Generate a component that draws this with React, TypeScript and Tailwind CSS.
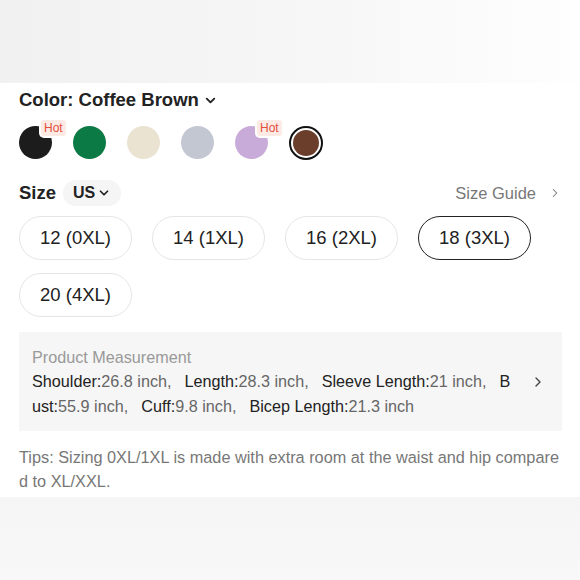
import { ChevronDown, ChevronRight } from "lucide-react";

const SWATCHES: { color: string; hot?: boolean; active?: boolean }[] = [
  { color: "#1c1c1c", hot: true },
  { color: "#0b7a45" },
  { color: "#ebe3d1" },
  { color: "#c3c7d1" },
  { color: "#c9abd9", hot: true },
  { color: "#6b3e2c", active: true },
];

const SIZES = ["12 (0XL)", "14 (1XL)", "16 (2XL)", "18 (3XL)", "20 (4XL)"];

const MEASURES = [
  ["Shoulder:", "26.8 inch,"],
  ["Length:", "28.3 inch,"],
  ["Sleeve Length:", "21 inch,"],
  ["Bust:", "55.9 inch,"],
  ["Cuff:", "9.8 inch,"],
  ["Bicep Length:", "21.3 inch"],
];

export default function App() {
  return (
    <div
      className="w-[580px] h-[580px] overflow-hidden bg-white flex flex-col text-[#222]"
      style={{ fontFamily: '"Liberation Sans", Arial, sans-serif' }}
    >
      {/* image strip above */}
      <div className="h-[83px] shrink-0 bg-gradient-to-r from-[#f1f1f1] via-[#f6f6f6] to-[#fefefe]" />

      <div className="pl-[19px] pr-[18px] pt-[5px]">
        <div className="flex items-center gap-[4px] h-[24px]">
          <span className="text-[18.5px] font-bold leading-[24px]">Color: Coffee Brown</span>
          <ChevronDown className="size-[15px] mt-[1px]" strokeWidth={3} aria-hidden />
        </div>

        <div className="mt-[8px] flex gap-[20px]">
          {SWATCHES.map((s, i) => (
            <div key={i} className="relative w-[34px] h-[40px] pt-[6px]">
              {s.active ? (
                <div className="size-[34px] rounded-full border-2 border-[#111] p-[2px] bg-white">
                  <div className="size-full rounded-full" style={{ background: s.color }} />
                </div>
              ) : (
                <div className="size-[33px] rounded-full" style={{ background: s.color }} />
              )}
              {s.hot && (
                <span className="absolute left-[22px] top-0 h-[16px] px-[3px] rounded-[3px] bg-[#feeae5] text-[#e1503b] text-[12px] leading-[16px] shadow-[0_0_0_2px_#ffffff]">
                  Hot
                </span>
              )}
            </div>
          ))}
        </div>

        <div className="mt-[20px] flex items-center h-[26px]">
          <span className="text-[18.5px] font-bold leading-[24px]">Size</span>
          <span className="ml-[7px] h-[26px] px-[10px] flex items-center gap-[2px] rounded-full bg-[#f5f5f5]">
            <span className="text-[16px] font-bold">US</span>
            <ChevronDown className="size-[14px]" strokeWidth={3} aria-hidden />
          </span>
          <span className="ml-auto flex items-center gap-[12px] text-[16.5px] text-[#777]">
            Size Guide
            <ChevronRight className="size-[14px]" strokeWidth={1.8} aria-hidden />
          </span>
        </div>

        <div className="mt-[10px] grid grid-cols-[repeat(4,113px)] gap-x-[20px] gap-y-[13px]">
          {SIZES.map((s) => (
            <div
              key={s}
              className={[
                "h-[44px] rounded-full flex items-center justify-center text-[18.5px]",
                s === "18 (3XL)" ? "border-[1.5px] border-[#222]" : "border border-[#e6e6e6]",
              ].join(" ")}
            >
              {s}
            </div>
          ))}
        </div>

        <div className="mt-[15px] bg-[#f6f6f6] pl-[13px] pt-[14px] pb-[12px] flex items-center">
          <div className="w-[480px]">
            <div className="text-[16.2px] leading-[23px] text-[#999]">Product Measurement</div>
            <div className="text-[16.2px] leading-[25px] break-all">
              {MEASURES.map(([k, v]) => (
                <span key={k} className="mr-[13px]">
                  <span className="text-[#222]">{k}</span>
                  <span className="text-[#666]">{v}</span>
                </span>
              ))}
            </div>
          </div>
          <ChevronRight className="size-[16px] ml-[18px] -mt-[2px] text-[#444]" strokeWidth={2} aria-hidden />
        </div>

        <p className="mt-[14px] text-[16.3px] leading-[24px] text-[#777] break-all">
          Tips: Sizing 0XL/1XL is made with extra room at the waist and hip compared to XL/XXL.
        </p>
      </div>

      <div className="mt-[4px] flex-1 bg-gradient-to-b from-[#f5f5f5] to-[#f8f8f8]" />
    </div>
  );
}
